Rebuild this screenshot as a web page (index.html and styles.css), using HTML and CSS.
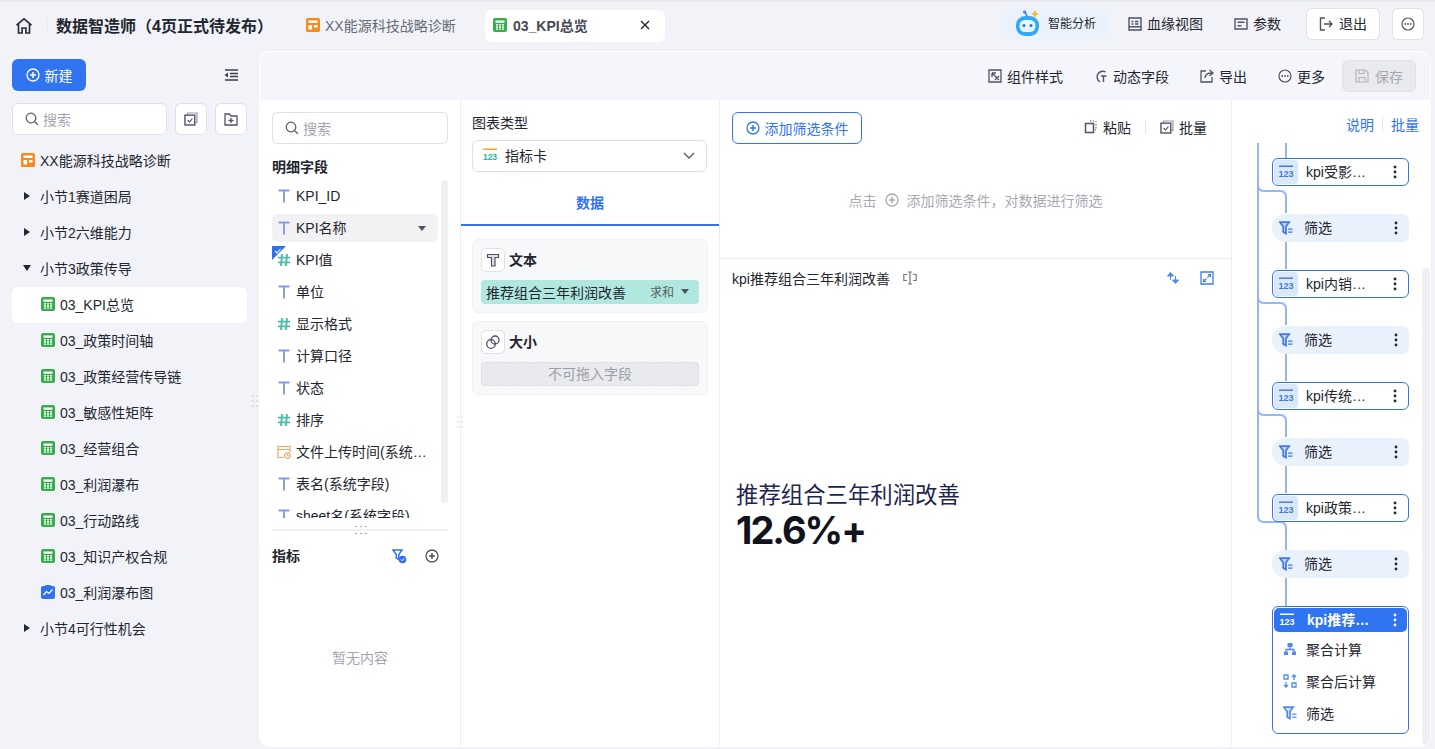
FILE: index.html
```html
<!DOCTYPE html>
<html lang="zh-CN">
<head>
  <meta charset="UTF-8" />
  <meta name="viewport" content="width=device-width, initial-scale=1.0"/>
  <title>数据智造师</title>
  <link rel="stylesheet" href="styles.css">
</head>
<body>
  <svg class="defs" width="0" height="0">
    <symbol id="i-t" viewBox="0 0 14 14"><path d="M1.500 1.500h11M7 1.500v12" fill="none" stroke="currentColor" stroke-width="1.900"/></symbol>
    <symbol id="i-num" viewBox="0 0 14 14"><path d="M5 1 4 13M10 1 9 13M1 4.600h12M1 9.400h12" fill="none" stroke="currentColor" stroke-width="1.900"/></symbol>
    <symbol id="i-sheet" viewBox="0 0 14 14"><rect width="14" height="14" rx="2" fill="#37ad4e"/><path d="M2.500 2.500h9v2.200h-9zM3 6h2v1.500H3zM6 6h2v1.500H6zM9 6h2v1.500H9zM3 8.300h2v1.500H3zM6 8.300h2v1.500H6zM9 8.300h2v1.500H9zM3 10.600h2v1.200H3zM6 10.600h2v1.200H6zM9 10.600h2v1.200H9z" fill="#fff"/></symbol>
    <symbol id="i-dash" viewBox="0 0 14 14"><rect width="14" height="14" rx="1.500" fill="#f58a1f"/><path d="M2.500 2.500h9v2.600h-9zM2.500 7h3.600v4.500H2.500zM8 7h3.500v2.400H8z" fill="#fff"/></symbol>
    <symbol id="i-plus" viewBox="0 0 14 14"><circle cx="7" cy="7" r="6" fill="none" stroke="currentColor" stroke-width="1.300"/><path d="M4 7h6M7 4v6" stroke="currentColor" stroke-width="1.500"/></symbol>
    <symbol id="i-search" viewBox="0 0 14 14"><circle cx="6" cy="6" r="4.800" fill="none" stroke="currentColor" stroke-width="1.200"/><path d="m9.600 9.600 3.200 3.200" stroke="currentColor" stroke-width="1.300"/></symbol>
    <symbol id="i-batch" viewBox="0 0 14 14"><path d="M3.500 2.800V1h9.500v9.500h-2" fill="none" stroke="#9a9cab" stroke-width="1.200"/><rect x="1" y="3.200" width="9.800" height="9.800" fill="none" stroke="#4f5266" stroke-width="1.400"/><path d="m3.600 8 1.900 1.900 3-3.400" fill="none" stroke="#4f5266" stroke-width="1.100"/></symbol>
    <symbol id="i-more" viewBox="0 0 14 14"><circle cx="7" cy="7" r="6" fill="none" stroke="currentColor" stroke-width="1.200"/><circle cx="4.200" cy="7" r=".9" fill="currentColor"/><circle cx="7" cy="7" r=".9" fill="currentColor"/><circle cx="9.800" cy="7" r=".9" fill="currentColor"/></symbol>
    <symbol id="i-123" viewBox="0 0 16 14"><path d="M1 1.200h14" stroke="currentColor" stroke-width="1.400"/><text x="8" y="12" text-anchor="middle" font-family="Liberation Sans" font-size="9" font-weight="700" fill="currentColor">123</text></symbol>
    <symbol id="i-filter" viewBox="0 0 14 14"><path d="M.8 1.200h9.400L7 5.600v7L4.200 11V5.600z" fill="currentColor" fill-opacity=".25" stroke="currentColor" stroke-width="1.700"/><path d="M9 8.200h4.500M9 11.200h4.500" stroke="currentColor" stroke-width="1.300"/></symbol>
    <symbol id="i-kebab" viewBox="0 0 4 14"><circle cx="2" cy="2" r="1.400" fill="currentColor"/><circle cx="2" cy="7" r="1.400" fill="currentColor"/><circle cx="2" cy="12" r="1.400" fill="currentColor"/></symbol>
    <symbol id="i-dots" viewBox="0 0 6 14"><path d="M1 1.500v1M5 1.500v1M1 6.500v1M5 6.500v1M1 11.500v1M5 11.500v1" stroke="#a9abb3"/></symbol>
  </svg>

  <div class="app">
    <header class="topbar">
      <svg class="home" width="18" height="18" viewBox="0 0 18 18"><path d="M1.500 8.200 9 1.800l7.500 6.400M3.500 7v9h3.600v-5h3.800v5h3.600V7" fill="none" stroke="#2b2f3a" stroke-width="1.700"/></svg>
      <div class="topbar-sep"></div>
      <div class="app-title">数据智造师（4页正式待发布）</div>
      <div class="tab"><svg class="ic14"><use href="#i-dash"/></svg>XX能源科技战略诊断</div>
      <div class="tab tab-active">
        <svg class="ic14"><use href="#i-sheet"/></svg><span class="tab-name">03_KPI总览</span>
        <svg class="tab-close" width="10" height="10" viewBox="0 0 10 10"><path d="m1 1 8 8M9 1 1 9" stroke="#23262f" stroke-width="1.400"/></svg>
      </div>
      <div class="top-right">
        <div class="ai-pill">
          <svg width="30" height="28" viewBox="0 0 30 28"><path d="M14 6 12 2" stroke="#2f7df0" stroke-width="1.600"/><circle cx="11.500" cy="2" r="1.500" fill="#2f7df0"/><path d="m22 0 1.200 2.800L26 4l-2.800 1.200L22 8l-1.200-2.800L18 4l2.800-1.200z" fill="#f7b731"/><rect x="3" y="6" width="23" height="20" rx="9" fill="#30a8f5"/><rect x="6.500" y="10" width="16" height="12" rx="5.500" fill="#e6f6ff"/><circle cx="11" cy="15.500" r="1.500" fill="#2b6fe0"/><circle cx="18" cy="15.500" r="1.500" fill="#2b6fe0"/></svg>
          <span>智能分析</span>
        </div>
        <div class="top-link top-link-a"><svg width="14" height="14" viewBox="0 0 14 14"><path d="M1 1h12v12H1zM3.500 4.500h2M7 4.500h3.500M3.500 7h2M7 7h3.500M1 9.800h12" fill="none" stroke="#4f5266" stroke-width="1.400"/></svg>血缘视图</div>
        <div class="top-link top-link-b"><svg width="14" height="12" viewBox="0 0 14 12"><path d="M1 1h12v10H1zM3.500 4.200h7M3.500 7.800h4" fill="none" stroke="#4f5266" stroke-width="1.400"/></svg>参数</div>
        <button class="btn-white btn-exit"><svg width="14" height="14" viewBox="0 0 14 14"><path d="M6 1H1.500v12H6M5 7h8M10 4l3 3-3 3" fill="none" stroke="#4f5266" stroke-width="1.400"/></svg>退出</button>
        <button class="btn-white btn-square"><svg class="ic14 c-dark"><use href="#i-more"/></svg></button>
      </div>
    </header>

    <div class="layout">
      <aside class="side">
        <div class="side-actions">
          <button class="btn-new"><svg class="ic14"><use href="#i-plus"/></svg>新建</button>
          <svg width="14" height="12" viewBox="0 0 14 12"><path d="M1 1h13M6 4.500h8M6 7.500h8M1 11h13" stroke="#3a3e4c" stroke-width="1.500"/><path d="M4 3.500v5L.5 6z" fill="#3a3e4c"/></svg>
        </div>
        <div class="side-search">
          <div class="search-box"><svg class="ic14"><use href="#i-search"/></svg>搜索</div>
          <button class="btn-white btn-square"><svg class="ic14"><use href="#i-batch"/></svg></button>
          <button class="btn-white btn-square"><svg width="14" height="13" viewBox="0 0 14 13"><path d="M1 1h4.500l1.500 2h6v9H1zM4.500 7.500h5M7 5v5" fill="none" stroke="#4f5266" stroke-width="1.300"/></svg></button>
        </div>
        <ul class="tree">
          <li class="tree-row tree-root"><svg class="ic14"><use href="#i-dash"/></svg>XX能源科技战略诊断</li>
          <li class="tree-row"><i class="caret-right"></i>小节1赛道困局</li>
          <li class="tree-row"><i class="caret-right"></i>小节2六维能力</li>
          <li class="tree-row"><i class="caret-down"></i>小节3政策传导</li>
          <li class="tree-row tree-leaf tree-sel"><svg class="ic14"><use href="#i-sheet"/></svg>03_KPI总览</li>
          <li class="tree-row tree-leaf"><svg class="ic14"><use href="#i-sheet"/></svg>03_政策时间轴</li>
          <li class="tree-row tree-leaf"><svg class="ic14"><use href="#i-sheet"/></svg>03_政策经营传导链</li>
          <li class="tree-row tree-leaf"><svg class="ic14"><use href="#i-sheet"/></svg>03_敏感性矩阵</li>
          <li class="tree-row tree-leaf"><svg class="ic14"><use href="#i-sheet"/></svg>03_经营组合</li>
          <li class="tree-row tree-leaf"><svg class="ic14"><use href="#i-sheet"/></svg>03_利润瀑布</li>
          <li class="tree-row tree-leaf"><svg class="ic14"><use href="#i-sheet"/></svg>03_行动路线</li>
          <li class="tree-row tree-leaf"><svg class="ic14"><use href="#i-sheet"/></svg>03_知识产权合规</li>
          <li class="tree-row tree-leaf"><svg class="ic14" viewBox="0 0 14 14"><rect y="1" width="14" height="13" rx="2" fill="#2f72ee"/><rect x="4" width="6" height="2.500" rx="1" fill="#2f72ee"/><path d="m2.500 10 3-3.500 2.500 2 3.500-4" fill="none" stroke="#fff" stroke-width="1.200"/></svg>03_利润瀑布图</li>
          <li class="tree-row"><i class="caret-right"></i>小节4可行性机会</li>
        </ul>
        <svg class="grip grip-side"><use href="#i-dots"/></svg>
      </aside>

      <main class="main">
        <div class="toolbar">
          <div class="tool"><svg width="14" height="14" viewBox="0 0 14 14"><path d="M1 1h12v12H1zM4 4l7 7M4 4v4M4 4h4M9 9l-2 2M9 9l2-2" fill="none" stroke="#4f5266" stroke-width="1.300"/></svg>组件样式</div>
          <div class="tool"><svg width="14" height="14" viewBox="0 0 14 14"><path d="M11.500 3A5.500 5.500 0 1 0 6 12.900M7 7h5.500M9.500 7v6" fill="none" stroke="#4f5266" stroke-width="1.400"/></svg>动态字段</div>
          <div class="tool"><svg width="14" height="14" viewBox="0 0 14 14"><path d="M6 2H1v11h11V8M5 9c0-3 2-5 7-5M9.500 1 13 4l-3.500 3" fill="none" stroke="#4f5266" stroke-width="1.300"/></svg>导出</div>
          <div class="tool"><svg class="ic14 c-dark"><use href="#i-more"/></svg>更多</div>
          <button class="btn-save"><svg width="14" height="14" viewBox="0 0 14 14"><path d="M1 1h9.500L13 3.500V13H1zM4 1v3.500h5V1M4 13V8.500h6V13" fill="none" stroke="#b4b6bd" stroke-width="1.200"/></svg>保存</button>
        </div>

        <div class="panels">
          <section class="col-fields">
            <div class="search-box search-fields"><svg class="ic14"><use href="#i-search"/></svg>搜索</div>
            <h3 class="fields-title">明细字段</h3>
            <div class="fields-wrap">
              <ul class="fields">
                <li class="field"><svg class="ic14 c-t"><use href="#i-t"/></svg>KPI_ID</li>
                <li class="field field-hover"><svg class="ic14 c-t"><use href="#i-t"/></svg>KPI名称<i class="caret-small"></i></li>
                <li class="field field-used">
                  <svg class="corner" viewBox="0 0 14 14"><path d="M0 0h14L0 14z" fill="#2f72ee"/><path d="m3 5 2 2 3.500-4" fill="none" stroke="#fff" stroke-width="1.100"/></svg>
                  <svg class="ic14 c-n"><use href="#i-num"/></svg>KPI值
                </li>
                <li class="field"><svg class="ic14 c-t"><use href="#i-t"/></svg>单位</li>
                <li class="field"><svg class="ic14 c-n"><use href="#i-num"/></svg>显示格式</li>
                <li class="field"><svg class="ic14 c-t"><use href="#i-t"/></svg>计算口径</li>
                <li class="field"><svg class="ic14 c-t"><use href="#i-t"/></svg>状态</li>
                <li class="field"><svg class="ic14 c-n"><use href="#i-num"/></svg>排序</li>
                <li class="field"><svg class="ic14" viewBox="0 0 14 14"><path d="M7 12.500H1V1.500h12V7M1 4.500h12" fill="none" stroke="#f5a262" stroke-width="1.200"/><circle cx="10.500" cy="10.500" r="2.800" fill="#fff" stroke="#f08a3c"/><path d="M10.500 9v1.500h1.300" fill="none" stroke="#f08a3c" stroke-width=".8"/></svg><span class="field-name">文件上传时间(系统字段)</span></li>
                <li class="field"><svg class="ic14 c-t"><use href="#i-t"/></svg>表名(系统字段)</li>
                <li class="field"><svg class="ic14 c-t"><use href="#i-t"/></svg>sheet名(系统字段)</li>
              </ul>
              <div class="fields-scroll"></div>
            </div>
            <div class="fields-divider"></div>
            <div class="metrics-head">
              <h3>指标</h3>
              <svg width="15" height="15" viewBox="0 0 15 15"><path d="M1 1h9L6.800 5.500v5L4.300 9V5.500z" fill="none" stroke="#2f72ee" stroke-width="1.500"/><circle cx="10.500" cy="10.500" r="3.800" fill="#2f72ee"/><path d="m8.800 10.500 1.300 1.300 2.200-2.400" fill="none" stroke="#fff"/></svg>
              <svg class="ic14 c-dark"><use href="#i-plus"/></svg>
            </div>
            <div class="empty">暂无内容</div>
          </section>

          <section class="col-type">
            <div class="type-head">
              <div class="type-label">图表类型</div>
              <div class="type-select">
                <svg class="ic123" viewBox="0 0 16 14"><path d="M1 1.200h14" stroke="#f5a623" stroke-width="1.400"/><text x="8" y="12" text-anchor="middle" font-family="Liberation Sans" font-size="8.500" font-weight="700" fill="#19b8a0">123</text></svg>
                <span>指标卡</span>
                <svg class="chev" width="12" height="7" viewBox="0 0 12 7"><path d="m1 1 5 5 5-5" fill="none" stroke="#555964" stroke-width="1.300"/></svg>
              </div>
            </div>
            <div class="type-tab">数据</div>
            <div class="well">
              <div class="well-head"><span class="well-ic"><svg width="14" height="14" viewBox="0 0 14 14"><path d="M1.500 1.500h11v3h-3.500v8.500H5.500V4.500h-4z" fill="#dfe1ea" stroke="#4f5266" stroke-width="1.200"/></svg></span>文本</div>
              <div class="pill"><span>推荐组合三年利润改善</span><em>求和</em><i class="caret-small"></i></div>
            </div>
            <div class="well">
              <div class="well-head"><span class="well-ic"><svg width="16" height="16" viewBox="0 0 16 16"><circle cx="6" cy="10" r="4.300" fill="none" stroke="#4f5266" stroke-width="1.300"/><rect x="6" y="2" width="8" height="8" rx="4" fill="none" stroke="#4f5266" stroke-width="1.300"/></svg></span>大小</div>
              <div class="dropzone">不可拖入字段</div>
            </div>
            <svg class="grip grip-type"><use href="#i-dots"/></svg>
          </section>

          <section class="col-center">
            <div class="filter-area">
              <div class="filter-bar">
                <button class="btn-filter"><svg class="ic14"><use href="#i-plus"/></svg>添加筛选条件</button>
                <div class="filter-tools">
                  <span class="tool"><svg width="14" height="14" viewBox="0 0 14 14"><path d="M1.500 3.500h8v9h-8z" fill="none" stroke="#4f5266" stroke-width="1.500"/><path d="M6 1h1.500M9 1h1M12 1v1M12 4v1.500M12 7v1.500M11 10h1" stroke="#4f5266"/></svg>粘贴</span>
                  <i class="tool-sep"></i>
                  <span class="tool"><svg class="ic14"><use href="#i-batch"/></svg>批量</span>
                </div>
              </div>
              <div class="filter-hint">点击<svg class="ic14"><use href="#i-plus"/></svg>添加筛选条件，对数据进行筛选</div>
            </div>
            <div class="chart-head">
              <span>kpi推荐组合三年利润改善</span>
              <svg class="rename" width="14" height="14" viewBox="0 0 14 14"><path d="M4 3.500H.8v6H4M10 3.500h3.200v6H10M5 1h4M5 13h4M7 1v12" fill="none" stroke="#73768a" stroke-width="1.200"/></svg>
              <svg class="swap" width="14" height="14" viewBox="0 0 14 14"><path d="M4.500 9V4M1.500 5 4.500 1.500 7.500 5zM9.500 5v5M6.500 9l3 3.500 3-3.500z" fill="#4f8af0" stroke="#4f8af0"/></svg>
              <svg class="expand" width="14" height="14" viewBox="0 0 14 14"><path d="M1 1h12v12H1z" fill="none" stroke="#3b7ff0" stroke-width="1.300"/><path d="M8 3.500h2.500V6M10.500 3.500 7.500 6.500M6 10.500H3.500V8M3.500 10.500l3-3" fill="none" stroke="#3b7ff0" stroke-width="1.100"/></svg>
            </div>
            <div class="kpi">
              <div class="kpi-label">推荐组合三年利润改善</div>
              <div class="kpi-value">12.6%+</div>
            </div>
          </section>

          <section class="col-flow">
            <div class="flow-head"><a>说明</a><i></i><a>批量</a></div>
            <div class="flow">
              <svg class="flow-lines" width="60" height="480" viewBox="0 0 60 480">
                <path d="M54 0v15M26 0v373q0 6 6 6h16q6 0 6 6v22M26 42q0 6 6 6h16q6 0 6 6v16M54 98v28M26 154q0 6 6 6h16q6 0 6 6v16M54 210v28M26 266q0 6 6 6h16q6 0 6 6v16M54 322v28M54 435v28" fill="none" stroke="#93b7f5" stroke-width="2"/>
              </svg>
              <div class="node"><span class="node-ic"><svg class="ic123"><use href="#i-123"/></svg></span><b>kpi受影响业务线</b><svg class="kebab"><use href="#i-kebab"/></svg></div>
              <div class="step"><svg class="ic14"><use href="#i-filter"/></svg><b>筛选</b><svg class="kebab"><use href="#i-kebab"/></svg></div>
              <div class="node"><span class="node-ic"><svg class="ic123"><use href="#i-123"/></svg></span><b>kpi内销业务占比</b><svg class="kebab"><use href="#i-kebab"/></svg></div>
              <div class="step"><svg class="ic14"><use href="#i-filter"/></svg><b>筛选</b><svg class="kebab"><use href="#i-kebab"/></svg></div>
              <div class="node"><span class="node-ic"><svg class="ic123"><use href="#i-123"/></svg></span><b>kpi传统业务占比</b><svg class="kebab"><use href="#i-kebab"/></svg></div>
              <div class="step"><svg class="ic14"><use href="#i-filter"/></svg><b>筛选</b><svg class="kebab"><use href="#i-kebab"/></svg></div>
              <div class="node"><span class="node-ic"><svg class="ic123"><use href="#i-123"/></svg></span><b>kpi政策影响程度</b><svg class="kebab"><use href="#i-kebab"/></svg></div>
              <div class="step"><svg class="ic14"><use href="#i-filter"/></svg><b>筛选</b><svg class="kebab"><use href="#i-kebab"/></svg></div>
              <div class="node-open">
                <div class="node node-active"><span class="node-ic"><svg class="ic123"><use href="#i-123"/></svg></span><b>kpi推荐组合三年</b><svg class="kebab"><use href="#i-kebab"/></svg></div>
                <div class="sub"><svg class="ic14" viewBox="0 0 14 14"><path d="M4.500 1h5v4h-5zM1 9.500h4V13H1zM9 9.500h4V13H9z" fill="#4f8af0"/><path d="M7 5v2.500H3v2M7 7.500h4v2" fill="none" stroke="#4f8af0" stroke-width="1.300"/></svg>聚合计算</div>
                <div class="sub"><svg class="ic14" viewBox="0 0 14 14"><path d="M1 1h4v4H1zM9 9h4v4H9z" fill="none" stroke="#4f8af0" stroke-width="1.300"/><path d="M11 6V1M9 3l2-2 2 2M3 8v5M1 11l2 2 2-2" fill="none" stroke="#4f8af0" stroke-width="1.300"/></svg>聚合后计算</div>
                <div class="sub"><svg class="ic14"><use href="#i-filter"/></svg>筛选</div>
              </div>
            </div>
            <div class="flow-scroll"></div>
          </section>
        </div>
      </main>
    </div>
  </div>
</body>
</html>
```

FILE: styles.css
```css
* {
  box-sizing: border-box;
}

html, body {
  height: 100%;
}

body {
  margin: 0;
  overflow: hidden;
  font-family: "Liberation Sans", "Noto Sans CJK SC", sans-serif;
  font-size: 14px;
  color: #23262f;
  background: #f1f3f9;
}

ul {
  list-style: none;
  margin: 0;
  padding: 0;
}

h3 {
  margin: 0;
  font-size: 14px;
  font-weight: 700;
}

button {
  font-family: inherit;
  font-size: 14px;
  cursor: pointer;
}

svg {
  flex: none;
}

.defs {
  position: absolute;
}

.ic14 {
  width: 14px;
  height: 14px;
}

.ic123 {
  width: 16px;
  height: 14px;
}

.c-dark {
  color: #4f5266;
}

.c-t {
  color: #7f9fe2;
}

.c-n {
  color: #4dbdaa;
}

.app {
  height: 749px;
  display: flex;
  flex-direction: column;
}

/* top bar */
.topbar {
  height: 51px;
  flex: none;
  display: flex;
  align-items: center;
  padding: 0 11px 2px 15px;
  border-top: 2px solid #e6e8ed;
}

.topbar-sep {
  width: 1px;
  height: 12px;
  margin: 0 8px 0 14px;
  background: #e9ebf0;
}

.app-title {
  width: 239px;
  padding-bottom: 2px;
  font-size: 16px;
  font-weight: 700;
  color: #23262f;
  white-space: nowrap;
}

.tab {
  height: 32px;
  width: 180px;
  display: flex;
  align-items: center;
  gap: 5px;
  padding: 0 0 2px 11px;
  color: #666a75;
  border-radius: 6px;
  white-space: nowrap;
}

.tab-active {
  width: 180px;
  margin-left: 10px;
  padding-left: 8px;
  gap: 6px;
  color: #464955;
  background: #fff;
}

.tab-name {
  flex: 1;
  font-weight: 700;
}

.tab-close {
  margin-right: 15px;
}

.top-right {
  margin-left: auto;
  margin-bottom: 3px;
  display: flex;
  align-items: center;
}

.ai-pill {
  width: 110px;
  height: 32px;
  display: flex;
  align-items: center;
  gap: 3px;
  padding-left: 13px;
  font-size: 12px;
  border-radius: 16px;
  background: #e9f2fd;
}

.ai-pill span {
  margin: 0 0 3px 2px;
}

.top-link {
  display: flex;
  align-items: center;
  gap: 5px;
  margin-left: 18px;
  padding-bottom: 2px;
}

.top-link svg,
.btn-exit svg {
  margin-top: 2px;
}

.top-link-b {
  margin-left: 31px;
  margin-right: 25px;
}

.btn-white {
  height: 32px;
  display: flex;
  align-items: center;
  justify-content: center;
  gap: 6px;
  padding: 0;
  color: #23262f;
  background: #fff;
  border: 1px solid #dfe1e8;
  border-radius: 6px;
}

.btn-exit {
  width: 74px;
  margin-right: 12px;
  padding-bottom: 2px;
}

.btn-square {
  width: 32px;
  flex: none;
}

/* layout */
.layout {
  flex: 1;
  min-height: 0;
  display: flex;
}

.side {
  position: relative;
  width: 259px;
  flex: none;
  padding: 8px 12px 0;
}

.side-actions {
  display: flex;
  align-items: center;
  justify-content: space-between;
  padding-right: 9px;
}

.btn-new {
  width: 74px;
  height: 32px;
  display: flex;
  align-items: center;
  justify-content: center;
  gap: 5px;
  padding: 0;
  color: #fff;
  background: #3074f2;
  border: none;
  border-radius: 6px;
}

.side-search {
  display: flex;
  gap: 8px;
  margin-top: 12px;
}

.search-box {
  flex: 1;
  height: 32px;
  display: flex;
  align-items: center;
  gap: 4px;
  padding-left: 12px;
  color: #a3a6ae;
  background: #fff;
  border: 1px solid #dfe1e8;
  border-radius: 6px;
}

.search-box svg {
  color: #555964;
}

.tree {
  margin-top: 8px;
}

.tree-row {
  height: 36px;
  display: flex;
  align-items: center;
  padding-left: 12px;
  padding-bottom: 2px;
  border-radius: 6px;
  white-space: nowrap;
}

.tree-root {
  padding-left: 9px;
  gap: 5px;
}

.tree-leaf {
  padding-left: 29px;
  gap: 5px;
}

.tree-sel {
  background: #fff;
}

.caret-right {
  width: 0;
  height: 0;
  margin-right: 10px;
  border-left: 6px solid #23262f;
  border-top: 4px solid transparent;
  border-bottom: 4px solid transparent;
}

.caret-down {
  width: 0;
  height: 0;
  margin: 0 9px 0 -1px;
  border-top: 6px solid #23262f;
  border-left: 4px solid transparent;
  border-right: 4px solid transparent;
}

.caret-small {
  width: 0;
  height: 0;
  border-top: 5px solid #4f5266;
  border-left: 4px solid transparent;
  border-right: 4px solid transparent;
}

.grip {
  position: absolute;
  width: 6px;
  height: 14px;
}

.grip-side {
  right: 1px;
  top: 343px;
}

/* main panel */
.main {
  flex: 1;
  min-width: 0;
  margin: 0 4px 2px 0;
  display: flex;
  flex-direction: column;
  overflow: hidden;
  background: #f5f6fb;
  border: 1px solid #fff;
  border-radius: 10px;
}

.toolbar {
  height: 48px;
  flex: none;
  display: flex;
  align-items: center;
  justify-content: flex-end;
  gap: 31px;
  padding-right: 14px;
}

.tool {
  display: flex;
  align-items: center;
  gap: 5px;
  padding-bottom: 1px;
  white-space: nowrap;
}

.btn-save {
  width: 74px;
  height: 32px;
  display: flex;
  align-items: center;
  justify-content: center;
  gap: 6px;
  margin-left: -14px;
  padding: 0;
  color: #a6a8b0;
  background: #e9eaee;
  border: 1px solid #e1e2e7;
  border-radius: 6px;
}

.panels {
  flex: 1;
  min-height: 0;
  display: flex;
  background: #fff;
}

/* field list */
.col-fields {
  width: 201px;
  flex: none;
  padding: 12px 12px 0;
  border-right: 1px solid #ececf0;
}

.search-fields {
  flex: none;
}

.fields-title {
  margin-top: 13px;
  line-height: 20px;
}

.fields-wrap {
  position: relative;
  height: 338px;
  margin-top: 3px;
  overflow: hidden;
}

.field {
  height: 32px;
  width: 166px;
  display: flex;
  align-items: center;
  gap: 5px;
  padding: 0 10px 0 5px;
  line-height: 32px;
  white-space: nowrap;
}

.field svg {
  width: 14px;
}

.field-name {
  min-width: 0;
  overflow: hidden;
  text-overflow: ellipsis;
}

.field-hover {
  height: 28px;
  margin: 2px 0;
  background: #f2f2f4;
  border-radius: 6px;
}

.field-hover .caret-small {
  margin: 0 2px 0 auto;
}

.field-used {
  position: relative;
}

.corner {
  position: absolute;
  left: 0;
  top: 2px;
  height: 14px;
}

.fields-scroll {
  position: absolute;
  right: 0;
  top: 0;
  width: 7px;
  height: 323px;
  background: #eff0f3;
  border-radius: 4px;
}

.fields-divider {
  position: relative;
  height: 2px;
  margin-top: 11px;
  background: #f1f1f3;
}

.fields-divider::before,
.fields-divider::after {
  content: "";
  position: absolute;
  left: 83px;
  width: 2px;
  height: 1px;
  background: #a9abb3;
  box-shadow: 5px 0 #a9abb3, 10px 0 #a9abb3;
}

.fields-divider::before {
  top: -3px;
}

.fields-divider::after {
  top: 4px;
}

.metrics-head {
  display: flex;
  align-items: center;
  margin-top: 15px;
  height: 20px;
}

.metrics-head h3 {
  flex: 1;
  padding-bottom: 2px;
}

.metrics-head .ic14 {
  margin: 0 9px 0 18px;
}

.empty {
  margin-top: 82px;
  line-height: 20px;
  text-align: center;
  color: #a3a6ae;
}

/* chart type column */
.col-type {
  position: relative;
  width: 259px;
  flex: none;
  border-right: 1px solid #ececf0;
}

.type-head {
  padding: 13px 12px 0 11px;
}

.type-label {
  line-height: 20px;
}

.type-select {
  height: 32px;
  display: flex;
  align-items: center;
  gap: 7px;
  margin-top: 7px;
  padding: 0 11px 2px 9px;
  border: 1px solid #dfe1e8;
  border-radius: 6px;
}

.type-select span {
  flex: 1;
}

.type-tab {
  height: 45px;
  margin: 9px 0 13px;
  line-height: 44px;
  text-align: center;
  font-weight: 700;
  color: #3074f2;
  border-bottom: 2px solid #3074f2;
}

.well {
  width: 236px;
  height: 74px;
  margin: 0 0 8px 11px;
  padding: 8px;
  background: #f7f8fa;
  border: 1px solid #f1f2f5;
  border-radius: 6px;
}

.well-head {
  height: 24px;
  display: flex;
  align-items: center;
  gap: 4px;
  padding-bottom: 2px;
  font-weight: 700;
}

.well-ic {
  width: 24px;
  height: 24px;
  margin-top: 2px;
  display: flex;
  align-items: center;
  justify-content: center;
  background: #fff;
  border: 1px solid #dfe1e8;
  border-radius: 5px;
}

.pill {
  height: 24px;
  display: flex;
  align-items: center;
  margin-top: 8px;
  padding: 0 10px 1px 5px;
  background: #b0e8e0;
  border-radius: 4px;
}

.pill span {
  flex: 1;
}

.pill em {
  margin-right: 7px;
  font-size: 12px;
  font-style: normal;
  color: #555d62;
}

.dropzone {
  height: 24px;
  margin-top: 8px;
  line-height: 22px;
  text-align: center;
  color: #9c9ea6;
  background: #e9eaee;
  border: 1px dashed #d9dade;
  border-radius: 4px;
}

.grip-type {
  left: -4px;
  top: 315px;
}

/* centre column */
.col-center {
  flex: 1;
  min-width: 0;
  display: flex;
  flex-direction: column;
  border-right: 1px solid #ececf0;
}

.filter-area {
  height: 159px;
  flex: none;
  padding: 12px 24px 0 12px;
  border-bottom: 1px solid #ececf0;
}

.filter-bar {
  display: flex;
  align-items: center;
  justify-content: space-between;
}

.btn-filter {
  width: 130px;
  height: 32px;
  display: flex;
  align-items: center;
  justify-content: center;
  gap: 5px;
  padding: 0 0 1px;
  color: #3074f2;
  background: #fff;
  border: 1px solid #3074f2;
  border-radius: 6px;
}

.filter-tools {
  display: flex;
  align-items: center;
  margin-bottom: 2px;
}

.tool-sep {
  width: 1px;
  height: 14px;
  margin: 0 14px;
  background: #e5e6ea;
}

.filter-hint {
  display: flex;
  align-items: center;
  justify-content: center;
  gap: 8px;
  margin: 46px 0 0 12px;
  color: #a7a9b0;
}

.chart-head {
  height: 40px;
  flex: none;
  display: flex;
  align-items: center;
  padding: 0 17px 2px 12px;
}

.rename {
  margin-left: 13px;
}

.swap {
  margin-left: auto;
}

.expand {
  margin-left: 20px;
}

.kpi {
  padding: 181px 16px 0;
}

.kpi-label {
  font-size: 22.4px;
  line-height: 32px;
  color: #1d2550;
}

.kpi-value {
  font-family: "Inter", "Liberation Sans", sans-serif;
  font-size: 38px;
  font-weight: 700;
  line-height: 36px;
  letter-spacing: -2px;
  color: #11131c;
}

/* right flow column */
.col-flow {
  position: relative;
  flex: none;
  width: 198px;
}

.flow-head {
  height: 43px;
  display: flex;
  align-items: center;
  justify-content: flex-end;
  padding: 5px 11px 0 0;
  color: #3074f2;
}

.flow-head i {
  width: 1px;
  height: 14px;
  margin: 0 8px;
  background: #dde4f2;
}

.flow {
  position: relative;
  padding: 15px 0 0 40px;
  display: flex;
  flex-direction: column;
  gap: 28px;
}

.flow-lines {
  position: absolute;
  left: 0;
  top: 0;
}

.node,
.step {
  position: relative;
  width: 137px;
  height: 28px;
  display: flex;
  align-items: center;
}

.node {
  background: #fff;
  border: 1px solid #3074f2;
  border-radius: 6px;
}

.node b,
.step b {
  min-width: 0;
  flex: 1;
  padding-bottom: 2px;
  font-weight: 400;
  overflow: hidden;
  white-space: nowrap;
  text-overflow: ellipsis;
}

.node-ic {
  width: 24px;
  height: 24px;
  flex: none;
  display: flex;
  align-items: center;
  justify-content: center;
  margin: 0 8px 0 1px;
  color: #3f78e8;
  background: #dbe7fb;
  border-radius: 4px;
}

.kebab {
  width: 4px;
  height: 14px;
  margin: 0 11px 0 14px;
  color: #23262f;
}

.step {
  padding-left: 7px;
  background: #e9f1fc;
  border-radius: 14px 6px 6px 14px;
}

.step > .ic14 {
  margin-right: 11px;
  color: #3f78e8;
}

.node-open {
  position: relative;
  width: 137px;
  height: 128px;
  background: #fff;
  border: 1px solid #3074f2;
  border-radius: 6px;
  padding: 1px;
}

.node-active {
  width: 133px;
  height: 24px;
  color: #fff;
  background: #3074f2;
  border: none;
  border-radius: 5px;
}

.node-active b {
  font-weight: 700;
}

.node-active .node-ic {
  color: #fff;
  background: none;
  height: 24px;
}

.node-active .kebab {
  color: #fff;
  margin-right: 10px;
}

.sub {
  height: 32px;
  display: flex;
  align-items: center;
  gap: 9px;
  padding: 0 0 2px 9px;
}

.node-active + .sub {
  margin-top: 2px;
}

.sub .ic14 {
  color: #4f8af0;
}

.flow-scroll {
  position: absolute;
  right: 0;
  top: 168px;
  width: 8px;
  height: 477px;
  background: #eff0f4;
  border-radius: 4px;
}
```
